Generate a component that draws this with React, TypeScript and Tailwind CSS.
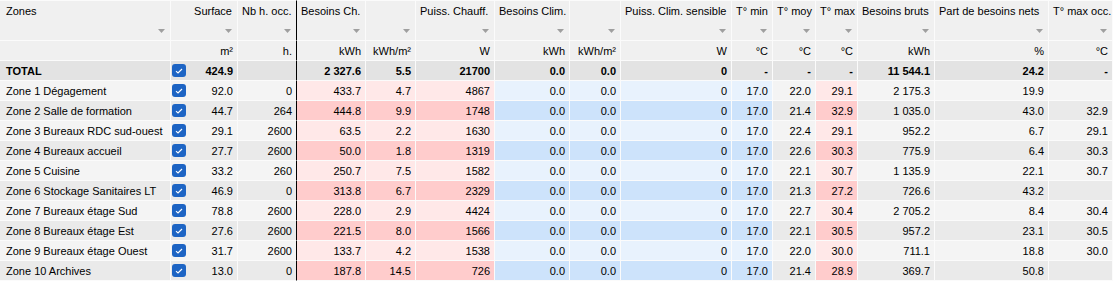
import React from "react";

const COLS =
  "grid grid-cols-[171px_67px_59px_69px_50px_79px_75px_51px_111px_41px_43px_42px_77px_114px_64px]";

const headers = [
  "Zones",
  "Surface",
  "Nb h. occ.",
  "Besoins Ch.",
  "",
  "Puiss. Chauff.",
  "Besoins Clim.",
  "",
  "Puiss. Clim. sensible",
  "T° min",
  "T° moy",
  "T° max",
  "Besoins bruts",
  "Part de besoins nets",
  "T° max occ.",
];

const units = ["", "m²", "h.", "kWh", "kWh/m²", "W", "kWh", "kWh/m²", "W", "°C", "°C", "°C", "kWh", "%", "°C"];

type T = "g" | "p" | "b";
const types: T[] = ["g", "g", "g", "p", "p", "p", "b", "b", "b", "b", "g", "p", "g", "g", "g"];

const bgLight: Record<T, string> = {
  g: "bg-[#f4f4f4]",
  p: "bg-[#ffe8e8]",
  b: "bg-[#e8f2fd]",
};
const bgStrong: Record<T, string> = {
  g: "bg-[#eaeaea]",
  p: "bg-[#ffcccc]",
  b: "bg-[#cde3fb]",
};

const total = ["TOTAL", "424.9", "", "2 327.6", "5.5", "21700", "0.0", "0.0", "0", "-", "-", "-", "11 544.1", "24.2", "-"];

const rows: string[][] = [
  ["Zone 1 Dégagement", "92.0", "0", "433.7", "4.7", "4867", "0.0", "0.0", "0", "17.0", "22.0", "29.1", "2 175.3", "19.9", ""],
  ["Zone 2 Salle de formation", "44.7", "264", "444.8", "9.9", "1748", "0.0", "0.0", "0", "17.0", "21.4", "32.9", "1 035.0", "43.0", "32.9"],
  ["Zone 3 Bureaux RDC sud-ouest", "29.1", "2600", "63.5", "2.2", "1630", "0.0", "0.0", "0", "17.0", "22.4", "29.1", "952.2", "6.7", "29.1"],
  ["Zone 4 Bureaux accueil", "27.7", "2600", "50.0", "1.8", "1319", "0.0", "0.0", "0", "17.0", "22.6", "30.3", "775.9", "6.4", "30.3"],
  ["Zone 5 Cuisine", "33.2", "260", "250.7", "7.5", "1582", "0.0", "0.0", "0", "17.0", "22.1", "30.7", "1 135.9", "22.1", "30.7"],
  ["Zone 6 Stockage Sanitaires LT", "46.9", "0", "313.8", "6.7", "2329", "0.0", "0.0", "0", "17.0", "21.3", "27.2", "726.6", "43.2", ""],
  ["Zone 7 Bureaux étage Sud", "78.8", "2600", "228.0", "2.9", "4424", "0.0", "0.0", "0", "17.0", "22.7", "30.4", "2 705.2", "8.4", "30.4"],
  ["Zone 8 Bureaux étage Est", "27.6", "2600", "221.5", "8.0", "1566", "0.0", "0.0", "0", "17.0", "22.1", "30.5", "957.2", "23.1", "30.5"],
  ["Zone 9 Bureaux étage Ouest", "31.7", "2600", "133.7", "4.2", "1538", "0.0", "0.0", "0", "17.0", "22.0", "30.0", "711.1", "18.8", "30.0"],
  ["Zone 10 Archives", "13.0", "0", "187.8", "14.5", "726", "0.0", "0.0", "0", "17.0", "21.4", "28.9", "369.7", "50.8", ""],
];

function borderR(i: number) {
  return i === 2 ? "border-r border-r-black" : "border-r border-r-[#fbfbfb]";
}

function Arrow() {
  return (
    <svg width="7" height="4" viewBox="0 0 7 4" className="block">
      <polygon points="0,0 7,0 3.5,4" fill="#9f9f9f" />
    </svg>
  );
}

function Check() {
  return (
    <span className="flex h-[13px] w-[14px] items-center justify-center rounded-[3px] bg-[#1d64c4]">
      <svg width="10" height="8" viewBox="0 0 10 8">
        <polyline points="2,4.2 4,6 8,2" fill="none" stroke="#ffffff" strokeWidth="1.1" />
      </svg>
    </span>
  );
}

function Row({ cells, bold, rowBg }: { cells: string[]; bold?: boolean; rowBg: (i: number) => string }) {
  return (
    <div className={COLS}>
      {cells.map((c, i) => (
        <div
          key={i}
          className={`flex h-[20px] items-center border-b border-b-[#fbfbfb] ${borderR(i)} ${rowBg(i)} ${
            i === 0 ? "pl-[6px]" : "pr-[4px]"
          } ${i === 1 ? "pl-[1px]" : ""} ${bold ? "font-bold" : ""} whitespace-nowrap overflow-hidden`}
        >
          {i === 1 && <Check />}
          {i !== 0 && <span className="ml-auto">{c}</span>}
          {i === 0 && <span>{c}</span>}
        </div>
      ))}
    </div>
  );
}

export default function App() {
  return (
    <div className="w-[1113px] h-[281px] overflow-hidden bg-[#f0f0f0] font-['Liberation_Sans',Arial,sans-serif] text-[11px] leading-[14px] text-black">
      <div className={COLS}>
        {headers.map((h, i) => (
          <div
            key={i}
            className={`flex h-[41px] flex-col border-t border-b border-t-[#fbfbfb] border-b-[#fbfbfb] ${borderR(i)} bg-[#f0f0f0] pt-[3px] pb-[7px] pr-[5px] whitespace-nowrap overflow-hidden`}
          >
            <span className={i === 0 ? "pl-[6px]" : i === 1 ? "self-end pl-[4px]" : "pl-[4px]"}>{h || "\u00a0"}</span>
            <span className="mt-auto self-end">
              <Arrow />
            </span>
          </div>
        ))}
      </div>
      <div className={COLS}>
        {units.map((u, i) => (
          <div
            key={i}
            className={`flex h-[20px] items-center justify-end border-b border-b-[#fbfbfb] ${borderR(i)} bg-[#f0f0f0] pr-[4px] whitespace-nowrap`}
          >
            {u}
          </div>
        ))}
      </div>
      <Row cells={total} bold rowBg={() => "bg-[#e3e3e3]"} />
      {rows.map((r, ri) => (
        <Row key={ri} cells={r} rowBg={(i) => (ri % 2 === 0 ? bgLight[types[i]] : bgStrong[types[i]])} />
      ))}
    </div>
  );
}
